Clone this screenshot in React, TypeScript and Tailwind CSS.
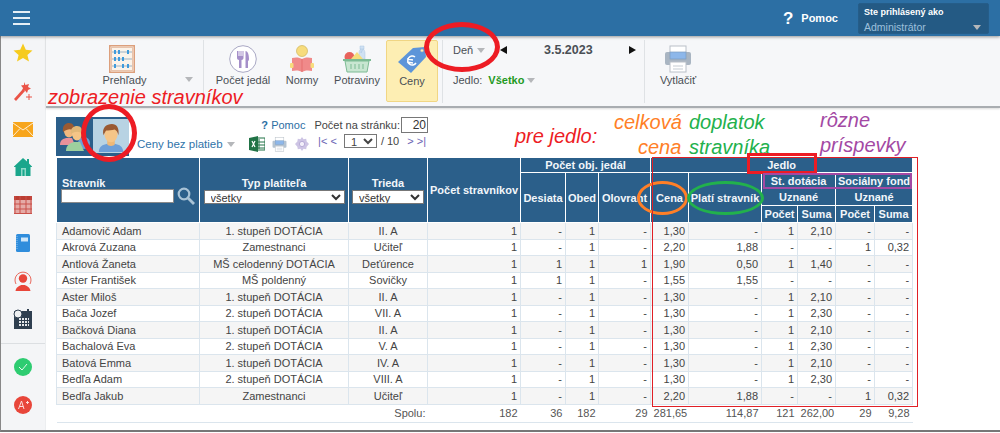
const font = "[font-family:'Liberation_Sans',Arial,sans-serif]";

type Row = [string, string, string, string, string, string, string, string, string, string, string];

const dot = (name: string, typ: string, trieda: string, suma: string): Row => [name, typ, trieda, "-", "1,30", "-", "1", suma, "-", "-", "-"];

const rows: Row[] = [
  dot("Adamovič Adam", "1. stupeň DOTÁCIA", "II. A", "2,10"),
  ["Akrová Zuzana", "Zamestnanci", "Učiteľ", "-", "2,20", "1,88", "-", "-", "1", "0,32", "-"],
  ["Antlová Žaneta", "MŠ celodenný DOTÁCIA", "Deťúrence", "1", "1,90", "0,50", "1", "1,40", "-", "-", "1"],
  ["Aster František", "MŠ poldenný", "Sovičky", "1", "1,55", "1,55", "-", "-", "-", "-", "-"],
  dot("Aster Miloš", "1. stupeň DOTÁCIA", "II. A", "2,10"),
  dot("Bača Jozef", "2. stupeň DOTÁCIA", "VII. A", "2,30"),
  dot("Bačková Diana", "1. stupeň DOTÁCIA", "II. A", "2,10"),
  dot("Bachalová Eva", "2. stupeň DOTÁCIA", "V. A", "2,30"),
  dot("Batová Emma", "1. stupeň DOTÁCIA", "IV. A", "2,10"),
  dot("Bedľa Adam", "2. stupeň DOTÁCIA", "VIII. A", "2,30"),
  ["Bedľa Jakub", "Zamestnanci", "Učiteľ", "-", "2,20", "1,88", "-", "-", "1", "0,32", "-"],
];

const colWidths = [143, 149, 79, 93, 45, 33, 52, 38, 73, 36, 38, 39, 38];

const Caret = ({ className = "" }: { className?: string }) => (
  <svg viewBox="0 0 8 5" className={`h-[5px] w-[8px] shrink-0 ${className}`}><path d="M0 0h8L4 5z" fill="#b5b7ba" /></svg>
);

const Star = () => (
  <svg viewBox="0 0 20 20" className="h-5 w-5"><path d="M10 .5l2.800 6.300 6.700.6-5.100 4.500 1.600 6.700L10 15.100l-6 3.500 1.600-6.700L.5 7.400l6.700-.6z" fill="#f6cb1e" /></svg>
);
const Wand = () => (
  <svg viewBox="0 0 20 20" className="h-5 w-5">
    <path d="M1 18l9-10 2 2-9 10z" fill="#ea5347" />
    <path d="M11 1l1.500 3L16 3l-1 3 3 1.500-3 1.500-1 3-2-2.500-3 .5 1-3-2-2.500 3-.5z" fill="#ea5347" />
    <path d="M16 13v6M13 16h6" stroke="#ea5347" strokeWidth="1" />
  </svg>
);
const Mail = () => (
  <svg viewBox="0 0 20 15" className="h-[15px] w-5">
    <rect width="20" height="15" fill="#f7a51c" />
    <path d="M0 1l10 7 10-7M0 14l7-7.500M20 14l-7-7.500" fill="none" stroke="#fff" strokeWidth="1" opacity=".8" />
  </svg>
);
const Home = () => (
  <svg viewBox="0 0 20 20" className="h-5 w-5">
    <path d="M10 1l4 3.500V2h2v4.500l3 3v.5h-1.500v9h-15v-9H1v-.5z" fill="#1aa68c" />
    <path d="M8 11h5v8h-1.500v-6.500h-2V19H8z" fill="#8fd8c8" />
  </svg>
);
const Grid = () => (
  <svg viewBox="0 0 18 18" className="h-[18px] w-[18px]">
    <rect width="18" height="18" fill="#e5aaa6" />
    <rect width="18" height="4" fill="#bb3d33" />
    <path d="M1 0v18M6 0v18M12 0v18M17 0v18M0 8h18M0 13h18M0 17.500h18" stroke="#c9514a" strokeWidth="1" />
  </svg>
);
const Book = () => (
  <svg viewBox="0 0 14 18" className="h-[18px] w-[14px]">
    <rect width="14" height="18" rx="1.500" fill="#2f8ddc" />
    <rect x="5" y="3.500" width="7" height="4" fill="#cfe6f8" />
    <path d="M1 2v14" stroke="#8cc2ee" strokeWidth="1" strokeDasharray="1 1" />
  </svg>
);
const Person = () => (
  <svg viewBox="0 0 20 20" className="h-5 w-5">
    <path d="M3 13a8 8 0 1 1 14 0" fill="none" stroke="#e9685c" strokeWidth="1" />
    <circle cx="10" cy="7.500" r="4.200" fill="#e8463a" />
    <path d="M2.500 20c.5-4 4-5 5.500-6h4c1.500 1 5 2 5.500 6z" fill="#e8463a" />
  </svg>
);
const Calendar = () => (
  <svg viewBox="0 0 20 20" className="h-5 w-5">
    <rect x="1" y="2" width="18" height="18" fill="#2f3f50" />
    <circle cx="5" cy="5" r="4" fill="#eef0f2" stroke="#2f3f50" />
    <rect x="14" y="0" width="2" height="4" fill="#2f3f50" />
    <path d="M6 10h10M6 13h10M6 16h10" stroke="#e6e9ec" strokeWidth="2" strokeDasharray="2 1" />
  </svg>
);
const Check = () => (
  <svg viewBox="0 0 18 18" className="h-[18px] w-[18px]">
    <circle cx="9" cy="9" r="9" fill="#2ecc71" />
    <path d="M5 9l3 3 5-6" fill="none" stroke="#e6f9ee" strokeWidth="1" />
  </svg>
);
const APlus = () => (
  <svg viewBox="0 0 18 18" className="h-[18px] w-[18px]">
    <circle cx="9" cy="9" r="9" fill="#e8463a" />
    <path d="M4.500 13L7.500 5l2.500 8M5.800 10.500h3.500M12 6.500h3M13.500 5v3" fill="none" stroke="#fbdcd9" strokeWidth="1" />
  </svg>
);

const Abacus = () => (
  <svg viewBox="0 0 26 28" className="h-7 w-[26px]">
    <rect x=".75" y=".75" width="24.500" height="26.500" fill="#fbf3ea" stroke="#dc9f7c" strokeWidth="1.500" />
    <rect x="2.500" y="2.500" width="21" height="23" fill="none" stroke="#e8c4ad" strokeWidth="1" />
    <g stroke="#9fb3c4" strokeWidth="1"><path d="M3 7h20M3 14h20M3 21h20" /></g>
    <g fill="#3f9bdc">
      <rect x="5" y="5" width="2" height="4" /><rect x="9" y="5" width="2" height="4" /><rect x="18" y="5" width="2" height="4" />
      <rect x="5" y="12" width="2" height="4" /><rect x="9" y="12" width="2" height="4" /><rect x="13" y="12" width="2" height="4" />
      <rect x="5" y="19" width="2" height="4" /><rect x="13" y="19" width="2" height="4" /><rect x="18" y="19" width="2" height="4" />
    </g>
  </svg>
);
const Plate = () => (
  <svg viewBox="0 0 28 28" className="h-7 w-7">
    <circle cx="14" cy="14" r="13.300" fill="#fff" stroke="#a9a8c4" strokeWidth="1" />
    <path d="M8 6v7c0 1 1 2 2 2v8h2.500v-8c1 0 2-1 2-2V6h-1v5h-1V6h-1v5h-1V6h-1v5H9V6z" fill="#a58fc9" />
    <path d="M16.500 6c2.500 0 3.500 4 3.500 8 0 1-.5 2-1 2v7h-2.500z" fill="#a58fc9" />
  </svg>
);
const Reader = () => (
  <svg viewBox="0 0 24 28" className="h-7 w-6">
    <circle cx="12" cy="6" r="5.500" fill="#f7dc7d" stroke="#cfb45a" strokeWidth=".7" />
    <path d="M2 13c4-1 8-.5 10 1 2-1.500 6-2 10-1v13c-4-1-8-.5-10 1-2-1.500-6-2-10-1z" fill="#f08a8a" />
    <path d="M12 14v13" stroke="#e56f6f" strokeWidth="1" />
    <rect y="18" width="3.500" height="5" rx="1" fill="#f7dc7d" />
    <rect x="20.500" y="18" width="3.500" height="5" rx="1" fill="#f7dc7d" />
  </svg>
);
const Basket = () => (
  <svg viewBox="0 0 30 28" className="h-7 w-[30px]">
    <path d="M19 8V4h-1V1h4v3h-1zM17 8c0-2 1-3 1.500-4h3c.5 1 1.500 2 1.500 4v6h-6z" fill="#cfe1f3" stroke="#a9c5e0" strokeWidth=".5" />
    <circle cx="7.500" cy="12" r="5" fill="#e8635c" />
    <path d="M9 14l6-7 6 7z" fill="#f5dd7c" />
    <path d="M1 14h28v2H1z" fill="#7dbb94" />
    <path d="M3 16h24l-2 11H5z" fill="#c8e6d1" stroke="#7dbb94" strokeWidth="1" />
    <path d="M9 19v5M13 19v5M17 19v5M21 19v5" stroke="#7dbb94" strokeWidth="1" />
  </svg>
);
const Tag = () => (
  <svg viewBox="0 0 30 28" className="h-7 w-[30px]">
    <path d="M1 16L16 2l12-1 1 10-15 16z" fill="#5d95d9" />
    <circle cx="25" cy="4.500" r="1.500" fill="#fdeeb3" stroke="#9ab" strokeWidth=".5" />
    <path d="M18 11a4.500 4.500 0 1 0 1 6M10 13l6 1M10 16l6 1" fill="none" stroke="#fff" strokeWidth="1.500" />
  </svg>
);
const Printer = ({ className, soft }: { className: string; soft?: boolean }) => (
  <svg viewBox="0 0 28 28" className={className}>
    <rect x="6" y="1" width="16" height="12" fill="#fff" stroke="#b9c0c8" strokeWidth="1" />
    <rect x="1" y="7" width="26" height="13" rx="2" fill={soft ? "#b4c3d1" : "#a9b5c2"} />
    <rect x="6" y="7" width="16" height="7" fill="#8db7ea" stroke="#7d9cc0" strokeWidth=".7" />
    <rect x="6" y="17" width="16" height="10" fill="#fff" stroke="#b9c0c8" strokeWidth="1" />
    <path d="M9 21h10M9 24h10" stroke="#c5ccd3" strokeWidth="1" />
  </svg>
);
const Excel = () => (
  <svg viewBox="0 0 16 16" className="h-4 w-4">
    <rect x="7" y="2" width="9" height="12" fill="#fff" stroke="#217346" strokeWidth="1" />
    <path d="M10 3v10M7 6h9M7 9h9M7 12h9" stroke="#217346" strokeWidth="1" />
    <path d="M0 2l9-2v16l-9-2z" fill="#217346" />
    <path d="M3 5l3 6M6 5l-3 6" stroke="#fff" strokeWidth="1.200" />
  </svg>
);
const Gear = () => (
  <svg viewBox="0 0 16 16" className="h-[14px] w-[14px]">
    <path d="M8 0l1.800 2.500 3-.5.500 3L16 8l-2.700 3-.5 3-3-.5L8 16l-1.800-2.500-3 .5-.5-3L0 8l2.700-3 .5-3 3 .5z" fill="#cdc4e4" />
    <circle cx="8" cy="8" r="3" fill="#f3f0fa" stroke="#b2a6d3" strokeWidth="1" />
  </svg>
);
const Search = () => (
  <svg viewBox="0 0 18 18" className="h-[18px] w-[18px]">
    <circle cx="7" cy="7" r="5.300" fill="none" stroke="#a9c3d6" strokeWidth="2.200" />
    <path d="M11 11l6 6" stroke="#a9c3d6" strokeWidth="2.800" />
  </svg>
);
const Face = () => (
  <svg viewBox="0 0 32 32" className="h-[30px] w-[30px]">
    <path d="M3 31c0-6 4-8 9-9h8c5 1 9 3 9 9z" fill="#6d9fd8" />
    <path d="M12 18h8v5c-1 2-7 2-8 0z" fill="#eeb877" />
    <ellipse cx="16" cy="12" rx="7" ry="8.500" fill="#f5c587" />
    <path d="M8 13C6 5 11 1 17 1c5 0 8 4 7 12-1-3-2-5-4-6-3 1-7 1-9 1-1 1-2 3-3 5z" fill="#9a5a32" />
  </svg>
);
const People = () => (
  <svg viewBox="0 0 30 30" className="h-[30px] w-[30px]">
    <path d="M0 24c0-5 3-6 6-7h6l3 7z" fill="#e9919a" />
    <ellipse cx="9" cy="10" rx="5" ry="6.500" fill="#f0b87e" />
    <path d="M3 11C2 4 6 2 9 2c4 0 6 3 5 8-2-2-6-3-11 1z" fill="#9a5a32" />
    <circle cx="24" cy="22" r="6" fill="#6d9fd8" />
    <path d="M6 30c0-6 4-8 8-9h6l4 9z" fill="#9dcf9e" />
    <ellipse cx="17" cy="13" rx="5" ry="6.500" fill="#f5c587" />
    <path d="M11 13c-1-6 3-8 6-8 4 0 6 3 5 8-2-3-7-3-11 0z" fill="#e2b878" />
  </svg>
);

const ToolBtn = ({ icon, label, className = "", labelClass = "" }: { icon: React.ReactNode; label: string; className?: string; labelClass?: string }) => (
  <div className={`flex flex-col items-center pt-[5px] ${className}`}>
    <div className="flex h-7 items-center justify-center">{icon}</div>
    <span className={`text-[11px] leading-[14px] text-[#4a4f55] whitespace-nowrap ${labelClass}`}>{label}</span>
  </div>
);

const Sep = () => <div className="h-[63px] w-px shrink-0 bg-[#dfe2e5]" />;

const SideCell = ({ children }: { children: React.ReactNode }) => (
  <div className="flex h-[38px] w-full shrink-0 items-center justify-center">{children}</div>
);

const th = "border border-white bg-[#2b5f8a] text-center align-middle text-[11px] font-bold leading-[14px] text-[#f2f6fa] px-0 whitespace-nowrap";
const sel = "mx-auto block h-[14px] border border-[#777] bg-white px-[2px] py-0 text-[11px] font-normal leading-none text-[#333]";

export default function App() {
  return (
    <div className={`relative h-[433px] w-[1000px] overflow-hidden bg-white text-[11px] ${font}`}>
      {/* top bar */}
      <header className="relative z-10 flex h-9 items-center bg-[#2c6fa4] shadow-[0_1px_3px_rgba(0,0,0,0.4)]">
        <div className="ml-[13px] flex w-[17px] flex-col gap-[4px]">
          <div className="h-[2px] bg-[#e6eff6]" />
          <div className="h-[2px] bg-[#e6eff6]" />
          <div className="h-[2px] bg-[#e6eff6]" />
        </div>
        <div className="ml-auto flex items-center text-white">
          <span className="text-[17px] font-bold leading-none">?</span>
          <span className="ml-[8px] text-[11px] font-bold">Pomoc</span>
          <div className="ml-[20px] mr-[11px] flex h-[31px] w-[131px] flex-col rounded-[2px] border border-[#255d89] bg-[#245a84] pl-[5px] pt-[2px]">
            <span className="text-[9px] font-bold leading-[13px]">Ste prihlásený ako</span>
            <div className="mt-[2px] flex items-center justify-between pr-[7px]">
              <span className="text-[10.500px] leading-[13px] text-[#9dc0dc]">Administrátor</span>
              <Caret />
            </div>
          </div>
        </div>
      </header>

      <div className="flex h-[396px] border-b-2 border-l border-[#777] border-l-[#888]">
        {/* sidebar */}
        <aside className="flex w-[45px] shrink-0 flex-col items-center border-r border-[#eceef0] bg-[#f4f5f7]">
          <div className="-mt-[2px] w-full">
            <SideCell><Star /></SideCell>
          </div>
          <SideCell><Wand /></SideCell>
          <SideCell><Mail /></SideCell>
          <SideCell><Home /></SideCell>
          <SideCell><Grid /></SideCell>
          <SideCell><Book /></SideCell>
          <SideCell><Person /></SideCell>
          <SideCell><Calendar /></SideCell>
          <div className="mt-[5px] h-px w-full shrink-0 bg-[#dcdfe2]" />
          <div className="mt-[4px] w-full"><SideCell><Check /></SideCell></div>
          <SideCell><APlus /></SideCell>
        </aside>

        <main className="flex min-w-0 flex-1 flex-col">
          {/* toolbar */}
          <div className="flex h-[72px] shrink-0 items-start border-b-2 border-[#a9adb1] bg-[#f6f7f9] pt-1 text-[#4a4f55] shadow-[0_1px_2px_rgba(0,0,0,0.15)]">
            <div className="flex items-start pl-2">
              <div className="flex w-[149px] items-end">
                <ToolBtn icon={<Abacus />} label="Prehľady" className="w-[136px]" labelClass="pl-[5px]" />
                <Caret className="-ml-[5px] mb-[5px]" />
              </div>
              <Sep />
            </div>
            <ToolBtn icon={<Plate />} label="Počet jedál" className="ml-[10px] w-[58px]" />
            <ToolBtn icon={<Reader />} label="Normy" className="w-[60px]" />
            <ToolBtn icon={<Basket />} label="Potraviny" className="w-[50px]" />
            <ToolBtn icon={<Tag />} label="Ceny" className="ml-[4px] h-[62px] w-[52px] rounded-[2px] border border-[#f1d684] bg-[#fdeeb3]" />
            <div className="ml-[4px]"><Sep /></div>
            <div className="flex h-[63px] w-[201px] flex-col pl-[10px] pr-[8px] pt-[2px]">
              <div className="flex h-[16px] items-center">
                <span className="w-[23px]">Deň</span>
                <Caret className="ml-[1px]" />
                <svg viewBox="0 0 7 8" className="ml-[15px] h-2 w-[7px]"><path d="M7 0v8L0 4z" fill="#111" /></svg>
                <span className="ml-[37px] text-[12.500px] font-bold text-[#4a4f55]">3.5.2023</span>
                <svg viewBox="0 0 7 8" className="ml-auto h-2 w-[7px]"><path d="M0 0v8l7-4z" fill="#111" /></svg>
              </div>
              <div className="mt-[14px] flex items-center">
                <span>Jedlo:</span>
                <span className="ml-[6px] font-bold text-[#1f9a1f]">Všetko</span>
                <Caret className="ml-[3px]" />
              </div>
            </div>
            <Sep />
            <ToolBtn icon={<Printer className="h-7 w-7" />} label="Vytlačiť" className="ml-[11px] w-[44px]" />
          </div>

          {/* content */}
          <div className="flex-1 pl-[10px] pt-[9px]">
            <div className="flex h-[39px] w-[372px]">
              <div className="flex w-[73px] shrink-0 items-center justify-between bg-[#2b5f8a] pb-[3px] pl-[4px] pr-0 pt-[2px]">
                <People />
                <div className="flex h-[34px] w-[36px] items-end justify-center bg-[#b8d3e3]"><Face /></div>
              </div>
              <div className="ml-[8px] flex min-w-0 flex-1 flex-col whitespace-nowrap">
                <div className="flex h-[16px] items-center justify-end">
                  <span className="text-[#2b6ea3]"><b>?</b> Pomoc</span>
                  <span className="ml-[9px] text-[#444]">Počet na stránku:</span>
                  <input readOnly value="20" className="ml-[1px] h-[16px] w-[27px] border border-[#777] bg-white pr-[1px] text-right text-[12px] text-[#333]" />
                </div>
                <div className="flex flex-1 items-start">
                  <div className="flex items-center pt-[3px]">
                    <span className="text-[11.500px] leading-[14px] text-[#2f74aa]">Ceny bez platieb</span>
                    <Caret className="ml-[4px]" />
                    <div className="ml-[14px] shrink-0"><Excel /></div>
                    <div className="ml-[7px] shrink-0"><Printer soft className="h-[15px] w-[15px]" /></div>
                    <div className="ml-[8px] shrink-0"><Gear /></div>
                  </div>
                  <div className="ml-auto flex items-center pr-[2px] text-[#444]">
                    <span className="text-[#6a63b3]">|&lt; &lt;</span>
                    <select className="ml-[7px] h-[14px] w-[33px] border border-[#777] bg-white px-[2px] py-0 text-[11px] leading-none"><option>1</option></select>
                    <span className="ml-[4px]">/ 10</span>
                    <span className="ml-[8px] text-[#6a63b3]">&gt; &gt;|</span>
                  </div>
                </div>
              </div>
            </div>

            <table className="mt-px w-[856px] table-fixed border-collapse border-b border-[#dbe5ed] text-[11px] text-[#444]">
              <colgroup>{colWidths.map((w, i) => <col key={i} style={{ width: w }} />)}</colgroup>
              <thead>
                <tr className="h-[15px]">
                  <th rowSpan={4} className={`${th} !text-left`}>
                    <div className="flex flex-col pl-[4px]">
                      <span className="pl-[1px]">Stravník</span>
                      <div className="-mt-[3px] flex items-center">
                        <input readOnly className="h-[14px] w-[113px] border border-[#8a8a8a] bg-white" />
                        <div className="ml-[3px]"><Search /></div>
                      </div>
                    </div>
                  </th>
                  <th rowSpan={4} className={th}>
                    <div>Typ platiteľa</div>
                    <select className={`${sel} w-[141px]`}><option>všetky</option></select>
                  </th>
                  <th rowSpan={4} className={th}>
                    <div>Trieda</div>
                    <select className={`${sel} w-[72px]`}><option>všetky</option></select>
                  </th>
                  <th rowSpan={4} className={th}>Počet stravníkov</th>
                  <th colSpan={3} className={th}>Počet obj. jedál</th>
                  <th colSpan={6} className={th}>Jedlo</th>
                </tr>
                <tr className="h-[16px]">
                  <th rowSpan={3} className={th}>Desiata</th>
                  <th rowSpan={3} className={th}>Obed</th>
                  <th rowSpan={3} className={th}>Olovrant</th>
                  <th rowSpan={3} className={th}>Cena</th>
                  <th rowSpan={3} className={th}>Platí stravník</th>
                  <th colSpan={2} className={`${th} !border-b-0`}>St. dotácia</th>
                  <th colSpan={2} className={`${th} !border-b-0`}>Sociálny fond</th>
                </tr>
                <tr className="h-[17px]">
                  <th colSpan={2} className={`${th} !border-t-0`}>Uznané</th>
                  <th colSpan={2} className={`${th} !border-t-0`}>Uznané</th>
                </tr>
                <tr className="h-[17px]">
                  <th className={th}>Počet</th>
                  <th className={th}>Suma</th>
                  <th className={th}>Počet</th>
                  <th className={th}>Suma</th>
                </tr>
              </thead>
              <tbody>
                {rows.map((r, i) => {
                  const c = "border border-[#dbe5ed] px-[3px] py-0 text-right leading-[14px]";
                  return (
                    <tr key={r[0]} className={`h-[16.500px] ${i % 2 === 0 ? "bg-[#f5f5f5]" : "bg-white"}`}>
                      <td className={`${c} !pl-[5px] !text-left`}>{r[0]}</td>
                      <td className={`${c} !text-center`}>{r[1]}</td>
                      <td className={`${c} !text-center`}>{r[2]}</td>
                      <td className={c}>1</td>
                      <td className={c}>{r[3]}</td>
                      <td className={c}>1</td>
                      <td className={c}>{r[10]}</td>
                      <td className={c}>{r[4]}</td>
                      <td className={c}>{r[5]}</td>
                      <td className={c}>{r[6]}</td>
                      <td className={c}>{r[7]}</td>
                      <td className={c}>{r[8]}</td>
                      <td className={c}>{r[9]}</td>
                    </tr>
                  );
                })}
                <tr className="h-[18px] text-[#555]">
                  <td /><td />
                  <td className="pr-[2px] text-right">Spolu:</td>
                  {["182", "36", "182", "29", "281,65", "114,87", "121", "262,00", "29", "9,28"].map((v, i) => (
                    <td key={i} className="px-[3px] text-right">{v}</td>
                  ))}
                </tr>
              </tbody>
            </table>
          </div>
        </main>
      </div>

      {/* hand-drawn annotations lying over the screenshot */}
      <div className="pointer-events-none absolute inset-0 z-20 text-[20px] italic leading-[24px]">
        <span className="absolute left-[48px] top-[85px] text-[#ed1c24]">zobrazenie stravníkov</span>
        <span className="absolute left-[515px] top-[124px] text-[#ed1c24]">pre jedlo:</span>
        <span className="absolute left-[614px] top-[110px] text-[#ff7f27]">celková</span>
        <span className="absolute left-[638px] top-[135px] text-[#ff7f27]">cena</span>
        <span className="absolute left-[689px] top-[110px] text-[#22b14c]">doplatok</span>
        <span className="absolute left-[689px] top-[135px] text-[#22b14c]">stravníka</span>
        <span className="absolute left-[820px] top-[108px] text-[#a349a4]">rôzne</span>
        <span className="absolute left-[820px] top-[133px] text-[#a349a4]">príspevky</span>
        <div className="absolute left-[424px] top-[22px] h-[50px] w-[76px] rounded-[50%] border-[5px] border-[#ed1c24]" />
        <div className="absolute left-[81px] top-[104px] h-[58px] w-[56px] rounded-[50%] border-[5px] border-[#ed1c24]" />
        <div className="absolute left-[637px] top-[181px] h-[34px] w-[51px] rounded-[50%] border-[3px] border-[#ff7f27]" />
        <div className="absolute left-[687px] top-[181px] h-[34px] w-[77px] rounded-[50%] border-[3px] border-[#22b14c]" />
        <div className="absolute left-[747px] top-[153px] h-[21px] w-[70px] border-[3px] border-[#ed1c24]" />
        <div className="absolute left-[763px] top-[173px] h-[16px] w-[149px] border-2 border-[#a349a4]" />
        <div className="absolute left-[652px] top-[157px] h-[250px] w-[266px] border border-[#e01f26]" />
      </div>
    </div>
  );
}
